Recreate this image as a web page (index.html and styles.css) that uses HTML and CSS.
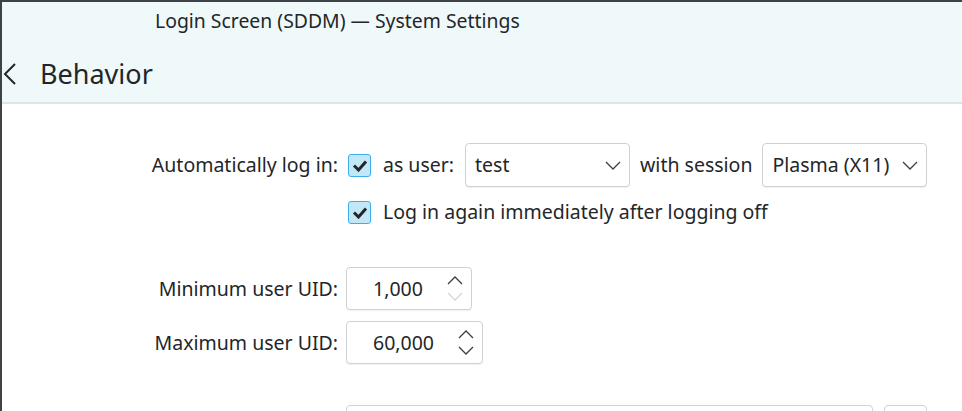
FILE: index.html
```html
<!DOCTYPE html>
<html>
<head>
<meta charset="utf-8">
<link rel="stylesheet" href="styles.css">
</head>
<body>
<div class="window">
  <header class="header">
    <div class="title">Login Screen (SDDM) — System Settings</div>
    <div class="pagebar">
      <svg class="back" width="14" height="22" viewBox="0 0 14 22"><path d="M12 1 L2 11 L12 21" fill="none" stroke="#232629" stroke-width="2"/></svg>
      <span class="heading">Behavior</span>
    </div>
  </header>
  <main class="form">
    <label class="lbl">Automatically log in:</label>
    <div class="field">
      <span class="check"><svg width="16" height="13" viewBox="0 0 16 13"><path d="M2 6.5 L6.5 11 L14 2.5" fill="none" stroke="#232629" stroke-width="3"/></svg></span>
      <span class="txt">as user:</span>
      <div class="combo combo-user"><span>test</span><svg class="chev" width="16" height="9" viewBox="0 0 16 9"><path d="M1 1 L8 8 L15 1" fill="none" stroke="#3b3f42" stroke-width="1.3"/></svg></div>
      <span class="txt tight">with session</span>
      <div class="combo combo-session tight"><span>Plasma (X11)</span><svg class="chev" width="16" height="9" viewBox="0 0 16 9"><path d="M1 1 L8 8 L15 1" fill="none" stroke="#3b3f42" stroke-width="1.3"/></svg></div>
    </div>

    <div class="lbl"></div>
    <div class="field row2">
      <span class="check"><svg width="16" height="13" viewBox="0 0 16 13"><path d="M2 6.5 L6.5 11 L14 2.5" fill="none" stroke="#232629" stroke-width="3"/></svg></span>
      <span class="txt">Log in again immediately after logging off</span>
    </div>

    <div class="spacer"></div><div class="spacer"></div>

    <label class="lbl">Minimum user UID:</label>
    <div class="field">
      <div class="spin"><span class="val">1,000</span>
        <span class="arrows">
          <svg width="16" height="9" viewBox="0 0 16 9"><path d="M1 8 L8 1 L15 8" fill="none" stroke="#3b3f42" stroke-width="1.3"/></svg>
          <svg width="16" height="9" viewBox="0 0 16 9"><path d="M1 1 L8 8 L15 1" fill="none" stroke="#d3d6d8" stroke-width="1.3"/></svg>
        </span>
      </div>
    </div>

    <label class="lbl">Maximum user UID:</label>
    <div class="field">
      <div class="spin"><span class="val">60,000</span>
        <span class="arrows">
          <svg width="16" height="9" viewBox="0 0 16 9"><path d="M1 8 L8 1 L15 8" fill="none" stroke="#3b3f42" stroke-width="1.3"/></svg>
          <svg width="16" height="9" viewBox="0 0 16 9"><path d="M1 1 L8 8 L15 1" fill="none" stroke="#3b3f42" stroke-width="1.3"/></svg>
        </span>
      </div>
    </div>

    <div class="spacer"></div><div class="spacer"></div>

    <div class="lbl"></div>
    <div class="field">
      <div class="wide"></div>
      <div class="small"></div>
    </div>
  </main>
</div>
</body>
</html>
```
FILE: styles.css
```css
html, body {
  margin: 0;
  padding: 0;
  background: #ffffff;
  overflow: hidden;
}
body {
  font-family: "Noto Sans", "Open Sans", sans-serif;
  color: #232629;
}
.window {
  width: 962px;
  height: 411px;
  box-sizing: border-box;
  border-top: 2px solid #3f4347;
  border-left: 2px solid #3f4347;
  overflow: hidden;
}
.header {
  background: #f0f9fa;
  height: 100px;
  border-bottom: 2px solid #dfe4e6;
}
.title {
  font-size: 19.4px;
  line-height: 24px;
  padding-top: 6.5px;
  padding-left: 153px;
}
.pagebar {
  display: flex;
  align-items: center;
  height: 34px;
  margin-top: 24px;
}
.back {
  margin-left: 1px;
  margin-right: 23px;
}
.heading {
  font-size: 27px;
  line-height: 34px;
}
.form {
  display: grid;
  grid-template-columns: 336px auto;
  column-gap: 8px;
  row-gap: 11px;
  align-items: center;
  padding-top: 39px;
  font-size: 19.5px;
}
.lbl {
  text-align: right;
  line-height: 28px;
  white-space: nowrap;
}
.field {
  display: flex;
  align-items: center;
  gap: 11px;
  line-height: 28px;
  white-space: nowrap;
}
.field .tight {
  margin-left: -1px;
}
.row2 {
  height: 28px;
}
.spacer {
  height: 19px;
}
.check {
  width: 21px;
  height: 21px;
  margin-left: 2px;
  border: 1px solid #3daee9;
  background: #c2e8f8;
  border-radius: 3px;
  display: flex;
  align-items: center;
  justify-content: center;
}
.check + .txt {
  margin-left: 1px;
}
.combo {
  box-sizing: border-box;
  height: 44px;
  border: 1px solid #cfd2d4;
  border-radius: 4px;
  background: #fff;
  box-shadow: 0 1px 1px rgba(0,0,0,0.06);
  display: flex;
  align-items: center;
  justify-content: space-between;
  padding: 0 8px 0 9px;
}
.combo-user {
  width: 165px;
}
.combo-session {
  width: 165px;
}
.spin {
  box-sizing: border-box;
  height: 43px;
  border: 1px solid #cfd2d4;
  border-radius: 4px;
  background: #fff;
  box-shadow: 0 1px 1px rgba(0,0,0,0.06);
  display: flex;
  align-items: center;
  padding: 0 8px 0 26px;
}
.val {
  margin-right: 24px;
}
.arrows {
  display: flex;
  flex-direction: column;
  gap: 7px;
}
.arrows svg {
  display: block;
}
.wide {
  box-sizing: border-box;
  width: 527px;
  height: 44px;
  border: 1px solid #cfd2d4;
  border-radius: 4px;
}
.small {
  box-sizing: border-box;
  width: 43px;
  height: 44px;
  border: 1px solid #cfd2d4;
  border-radius: 4px;
}
```
